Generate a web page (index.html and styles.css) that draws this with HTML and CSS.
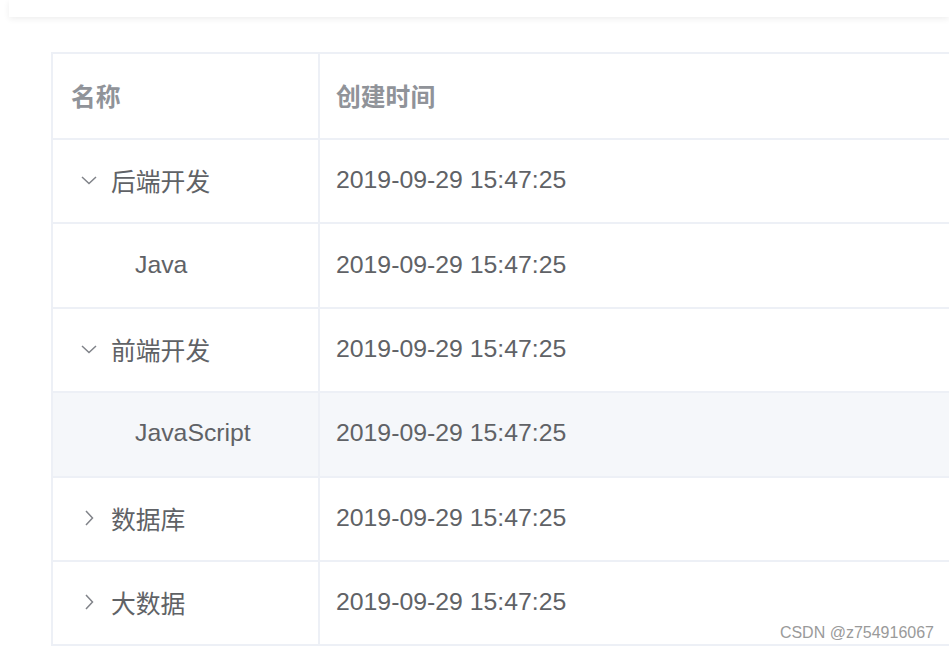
FILE: index.html
```html
<!DOCTYPE html>
<html lang="zh">
<head>
<meta charset="utf-8">
<link rel="stylesheet" href="styles.css">
</head>
<body>
<div class="topbar"></div>
<div class="table">
  <div class="row head">
    <div class="cell c1">名称</div>
    <div class="cell c2">创建时间</div>
  </div>
  <div class="row">
    <div class="cell c1"><span class="icon"><svg width="18" height="18" viewBox="0 0 18 18"><path d="M2 6 L9 12.5 L16 6" fill="none" stroke="#808389" stroke-width="1.5"/></svg></span>后端开发</div>
    <div class="cell c2">2019-09-29 15:47:25</div>
  </div>
  <div class="row">
    <div class="cell c1 child"><span class="icon"></span>Java</div>
    <div class="cell c2">2019-09-29 15:47:25</div>
  </div>
  <div class="row">
    <div class="cell c1"><span class="icon"><svg width="18" height="18" viewBox="0 0 18 18"><path d="M2 6 L9 12.5 L16 6" fill="none" stroke="#808389" stroke-width="1.5"/></svg></span>前端开发</div>
    <div class="cell c2">2019-09-29 15:47:25</div>
  </div>
  <div class="row hover">
    <div class="cell c1 child"><span class="icon"></span>JavaScript</div>
    <div class="cell c2">2019-09-29 15:47:25</div>
  </div>
  <div class="row">
    <div class="cell c1"><span class="icon"><svg width="18" height="18" viewBox="0 0 18 18"><path d="M6 2 L12.5 9 L6 16" fill="none" stroke="#808389" stroke-width="1.5"/></svg></span>数据库</div>
    <div class="cell c2">2019-09-29 15:47:25</div>
  </div>
  <div class="row">
    <div class="cell c1"><span class="icon"><svg width="18" height="18" viewBox="0 0 18 18"><path d="M6 2 L12.5 9 L6 16" fill="none" stroke="#808389" stroke-width="1.5"/></svg></span>大数据</div>
    <div class="cell c2">2019-09-29 15:47:25</div>
  </div>
</div>
<div class="watermark">CSDN @z754916067</div>
</body>
</html>
```
FILE: styles.css
```css
html, body {
  margin: 0;
  padding: 0;
  background: #ffffff;
  overflow: hidden;
  width: 949px;
  height: 649px;
}
body {
  font-family: "Liberation Sans", "Noto Sans CJK SC", Arial, sans-serif;
  position: relative;
}
.topbar {
  height: 17px;
  margin-left: 9px;
  background: #ffffff;
  box-shadow: 0 2px 6px rgba(0, 0, 0, 0.07);
}
.table {
  margin-top: 35px;
  margin-left: 51px;
  width: 898px;
  box-sizing: border-box;
  border-top: 2px solid #edf0f6;
  border-left: 2px solid #edf0f6;
}
.row {
  display: grid;
  grid-template-columns: 267px 1fr;
  height: 84.4px;
  box-sizing: border-box;
  border-bottom: 2px solid #edf0f6;
}
.row.head {
  height: 86px;
}
.row.hover {
  background: #f5f7fa;
}
.cell {
  display: flex;
  align-items: center;
  font-size: 24.8px;
  color: #606266;
  padding-bottom: 2px;
}
.c1 {
  padding-left: 18px;
  border-right: 2px solid #edf0f6;
}
.c2 {
  padding-left: 16px;
}
.head .cell {
  color: #909399;
  font-weight: bold;
}
.icon {
  display: inline-flex;
  align-items: center;
  justify-content: center;
  width: 36px;
  height: 24px;
  margin-right: 4px;
}
.child {
  padding-left: 42px;
}
.watermark {
  position: absolute;
  right: 15px;
  bottom: 8px;
  font-size: 16px;
  line-height: 16px;
  color: #9a9a9a;
  text-shadow: 0 0 2px #ffffff;
}
```
